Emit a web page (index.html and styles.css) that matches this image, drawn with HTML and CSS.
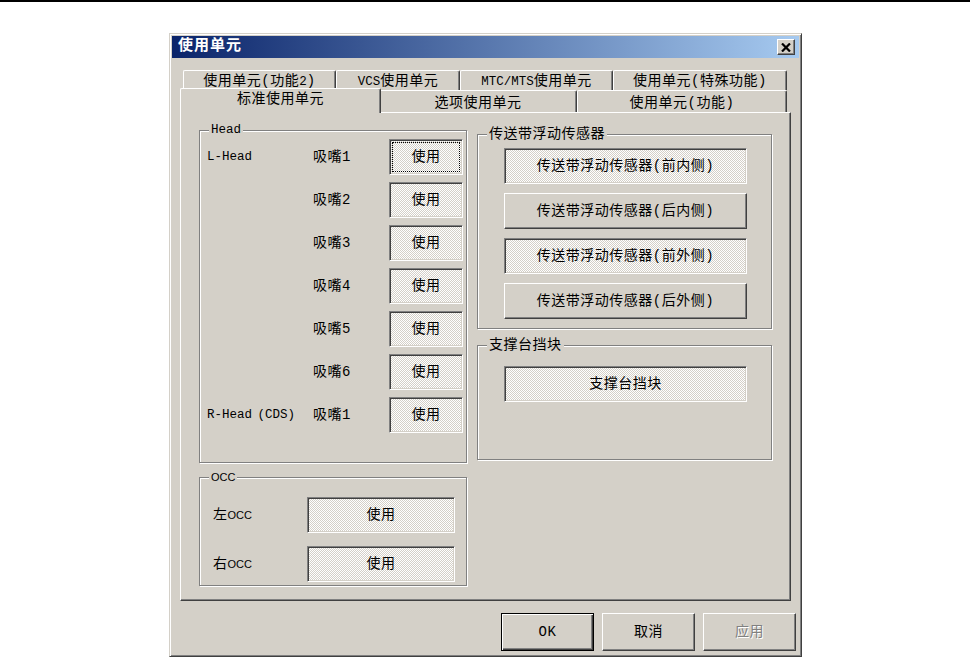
FILE: index.html
```html
<!DOCTYPE html>
<html lang="zh-CN">

<head>
    <meta charset="UTF-8">
    <title>使用单元</title>
    <link rel="stylesheet" href="styles.css">
</head>

<body>
    <div class="topline"></div>

    <div class="dialog">
        <div class="titlebar">
            <span class="title">使用单元</span>
            <button class="close" type="button" aria-label="关闭">
                <svg width="10" height="9" viewBox="0 0 10 9">
                    <path d="M1 0.5 L9 8.5 M9 0.5 L1 8.5" stroke="#000" stroke-width="2.2" fill="none" />
                </svg>
            </button>
        </div>

        <div class="client">
            <div class="tabctl">
                <div class="tab-row tab-row-back">
                    <div class="tab tab-a">使用单元(功能<span class="mono-sm">2</span>)</div>
                    <div class="tab tab-b"><span class="mono-sm">VCS</span>使用单元</div>
                    <div class="tab tab-c"><span class="mono-sm">MTC/MTS</span>使用单元</div>
                    <div class="tab tab-d">使用单元(特殊功能)</div>
                </div>
                <div class="tab-row tab-row-front">
                    <div class="tab tab-e active">标准使用单元</div>
                    <div class="tab tab-f">选项使用单元</div>
                    <div class="tab tab-g">使用单元(功能)</div>
                </div>

                <div class="panel">
                    <div class="col col-left">
                        <div class="group group-head">
                            <span class="group-title mono-sm">Head</span>
                            <div class="head-grid">
                                <span class="mono-sm">L-Head</span><span>吸嘴1</span><button class="btn on focus">使用</button>
                                <span></span><span>吸嘴2</span><button class="btn on">使用</button>
                                <span></span><span>吸嘴3</span><button class="btn on">使用</button>
                                <span></span><span>吸嘴4</span><button class="btn on">使用</button>
                                <span></span><span>吸嘴5</span><button class="btn on">使用</button>
                                <span></span><span>吸嘴6</span><button class="btn on">使用</button>
                                <span class="mono-sm tight">R-Head (CDS)</span><span>吸嘴1</span><button class="btn on">使用</button>
                            </div>
                        </div>

                        <div class="group group-occ">
                            <span class="group-title sans-sm">OCC</span>
                            <div class="occ-grid">
                                <span>左<span class="sans-sm">OCC</span></span><button class="btn on">使用</button>
                                <span>右<span class="sans-sm">OCC</span></span><button class="btn on">使用</button>
                            </div>
                        </div>
                    </div>

                    <div class="col col-right">
                        <div class="group group-belt">
                            <span class="group-title">传送带浮动传感器</span>
                            <div class="btn-list">
                                <button class="btn on">传送带浮动传感器(前内侧)</button>
                                <button class="btn">传送带浮动传感器(后内侧)</button>
                                <button class="btn on">传送带浮动传感器(前外侧)</button>
                                <button class="btn">传送带浮动传感器(后外侧)</button>
                            </div>
                        </div>

                        <div class="group group-stop">
                            <span class="group-title">支撑台挡块</span>
                            <div class="btn-list">
                                <button class="btn on">支撑台挡块</button>
                            </div>
                        </div>
                    </div>
                </div>
            </div>

            <div class="actions">
                <button class="btn default">OK</button>
                <button class="btn">取消</button>
                <button class="btn disabled" disabled>应用</button>
            </div>
        </div>
    </div>
</body>

</html>
```

FILE: styles.css
```css
body {
    margin: 0;
    background: #fff;
    font: 14px/16px "Liberation Mono", "Noto Sans CJK SC", monospace;
    letter-spacing: 0.5px;
    color: #000;
}

.mono-sm {
    font-size: 12.5px;
    letter-spacing: 0;
}

.tight {
    word-spacing: -2px;
}

.sans-sm {
    font-family: "Liberation Sans", "Noto Sans CJK SC", sans-serif;
    font-size: 11px;
    letter-spacing: 0;
}

.topline {
    height: 2px;
    background: #000;
}

/* window frame */
.dialog {
    width: 633px;
    height: 624px;
    margin: 31px 0 0 169px;
    box-sizing: border-box;
    padding: 2px;
    background: #d4d0c8;
    border: 1px solid;
    border-color: #d4d0c8 #404040 #404040 #d4d0c8;
    box-shadow: inset 1px 1px 0 #fff, inset -1px -1px 0 #808080;
}

.titlebar {
    height: 22px;
    display: flex;
    align-items: center;
    justify-content: space-between;
    padding: 0 4px 0 6px;
    background: linear-gradient(to right, #0a246a, #a6caf0);
}

.title {
    color: #fff;
    font-weight: bold;
    font-size: 15px;
    letter-spacing: 1px;
}

.close {
    width: 18px;
    height: 16px;
    padding: 0;
    display: flex;
    align-items: center;
    justify-content: center;
    background: #d4d0c8;
    border: 1px solid;
    border-color: #fff #404040 #404040 #fff;
    box-shadow: inset -1px -1px 0 #808080;
}

.client {
    padding: 12px 0 0 8px;
}

/* tabs */
.tabctl {
    width: 611px;
}

.tab-row {
    display: flex;
}

.tab-row-back {
    height: 20px;
    padding-left: 3px;
}

.tab-row-front {
    height: 22px;
    padding-left: 2px;
}

.tab {
    box-sizing: border-box;
    height: 100%;
    text-align: center;
    white-space: nowrap;
    background: #d4d0c8;
    border: 1px solid;
    border-bottom: 0;
    border-color: #fff #404040 #fff #fff;
    border-radius: 2px 2px 0 0;
    box-shadow: inset -1px 0 0 #808080;
}

.tab-row-back .tab {
    padding-top: 2px;
}

.tab-row-front .tab {
    padding-top: 4px;
}

.tab-a { width: 153px; }
.tab-b { width: 124px; }
.tab-c { width: 153px; }
.tab-d { width: 174px; }
.tab-e { width: 197px; }
.tab-f { width: 198px; }
.tab-g { width: 210px; }

.tab-row-front .tab.active {
    position: relative;
    z-index: 1;
    width: 201px;
    height: 25px;
    margin: -2px -2px -1px;
    padding-top: 2px;
}

.panel {
    box-sizing: border-box;
    height: 489px;
    display: flex;
    gap: 9px;
    padding: 17px 0 0 18px;
    border: 1px solid;
    border-color: #fff #404040 #404040 #fff;
    box-shadow: inset -1px -1px 0 #808080;
}

.col {
    display: flex;
    flex-direction: column;
}

.col-left {
    width: 269px;
    gap: 14px;
}

.col-right {
    width: 296px;
    margin-top: 4px;
    gap: 16px;
}

/* group boxes */
.group {
    position: relative;
    box-sizing: border-box;
    border: 1px solid #808080;
    box-shadow: 1px 1px 0 #fff, inset 1px 1px 0 #fff;
}

.group-title {
    position: absolute;
    top: -9px;
    left: 9px;
    padding: 0 2px;
    background: #d4d0c8;
    line-height: 16px;
}

.group-head {
    width: 268px;
    height: 333px;
}

.group-occ {
    width: 268px;
    height: 109px;
}

.group-belt {
    width: 295px;
    height: 195px;
}

.group-stop {
    width: 295px;
    height: 115px;
}

.head-grid {
    display: grid;
    grid-template-columns: 106px 76px 74px;
    grid-auto-rows: 36px;
    row-gap: 7px;
    align-items: center;
    padding: 8px 0 0 7px;
}

.occ-grid {
    display: grid;
    grid-template-columns: 94px 148px;
    grid-auto-rows: 36px;
    row-gap: 13px;
    align-items: center;
    padding: 19px 0 0 13px;
}

.btn-list {
    display: flex;
    flex-direction: column;
    gap: 9px;
    padding: 13px 0 0 26px;
}

.group-stop .btn-list {
    padding-top: 20px;
}

.btn-list .btn {
    width: 243px;
}

/* buttons */
.btn {
    box-sizing: border-box;
    height: 36px;
    padding: 0;
    font: inherit;
    letter-spacing: inherit;
    color: #000;
    background: #d4d0c8;
    border: 1px solid;
    border-color: #fff #404040 #404040 #fff;
    box-shadow: inset -1px -1px 0 #808080;
    white-space: nowrap;
}

.btn.on {
    border-color: #808080 #fff #fff #808080;
    box-shadow: inset 1px 1px 0 #404040, inset -1px -1px 0 #d4d0c8;
    background: conic-gradient(#fff 25%, #d4d0c8 0 50%, #fff 0 75%, #d4d0c8 0) 0 0 / 2px 2px;
}

.btn.focus {
    outline: 1px dotted #000;
    outline-offset: -4px;
}

.actions {
    display: flex;
    justify-content: flex-end;
    gap: 8px;
    margin-top: 12px;
    padding-right: 3px;
}

.actions .btn {
    width: 93px;
    height: 38px;
}

.btn.default {
    border-color: #000;
    box-shadow: inset 1px 1px 0 #fff, inset -1px -1px 0 #404040, inset -2px -2px 0 #808080;
}

.btn.disabled {
    color: #808080;
    text-shadow: 1px 1px 0 #fff;
}
```
